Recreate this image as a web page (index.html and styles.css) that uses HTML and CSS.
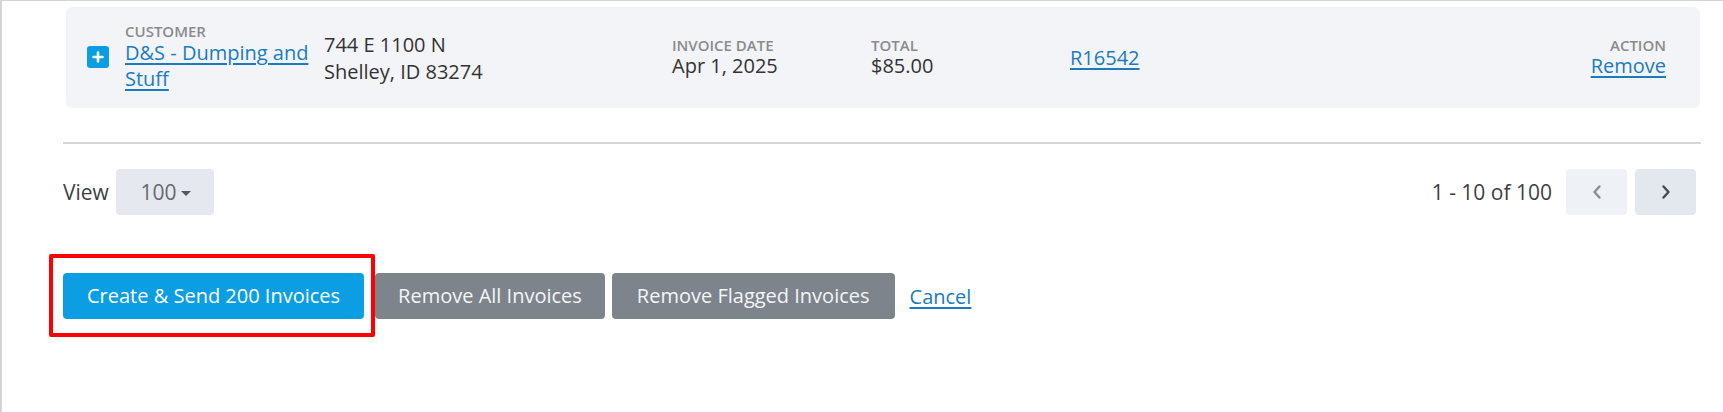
FILE: index.html
```html
<!DOCTYPE html>
<html lang="en">
<head>
<meta charset="utf-8">
<title>Invoices</title>
<link rel="stylesheet" href="styles.css">
</head>
<body>
<div class="page">
  <div class="content">
    <div class="card">
      <div class="cell cell-icon">
        <span class="expand">
          <svg width="22" height="22" viewBox="0 0 22 22"><path d="M11 6.5v9M6.5 11h9" stroke="#fff" stroke-width="2.6" stroke-linecap="round"/></svg>
        </span>
      </div>
      <div class="cell">
        <div class="label">CUSTOMER</div>
        <a class="link customer-link" href="#">D&amp;S - Dumping and Stuff</a>
      </div>
      <div class="cell address">
        <div>744 E 1100 N</div>
        <div>Shelley, ID 83274</div>
      </div>
      <div class="cell">
        <div class="label">INVOICE DATE</div>
        <div class="value">Apr 1, 2025</div>
      </div>
      <div class="cell">
        <div class="label">TOTAL</div>
        <div class="value">$85.00</div>
      </div>
      <div class="cell">
        <a class="link ref" href="#">R16542</a>
      </div>
      <div class="cell cell-action">
        <div class="label">ACTION</div>
        <a class="link value" href="#">Remove</a>
      </div>
    </div>

    <div class="divider"></div>

    <div class="pager">
      <div class="view">
        <span class="view-label">View</span>
        <button class="select" type="button">100 <span class="caret"></span></button>
      </div>
      <div class="nav">
        <span class="range">1 - 10 of 100</span>
        <button class="page-btn prev" type="button" aria-label="Previous">
          <svg width="12" height="16" viewBox="0 0 12 16"><path d="M8.5 2.5L3.5 8l5 5.5" fill="none" stroke="#8a8d91" stroke-width="2.4" stroke-linecap="round" stroke-linejoin="round"/></svg>
        </button>
        <button class="page-btn next" type="button" aria-label="Next">
          <svg width="12" height="16" viewBox="0 0 12 16"><path d="M3.5 2.5L8.5 8l-5 5.5" fill="none" stroke="#45484d" stroke-width="2.4" stroke-linecap="round" stroke-linejoin="round"/></svg>
        </button>
      </div>
    </div>

    <div class="actions">
      <span class="highlight-wrap">
        <button class="btn btn-primary" type="button">Create &amp; Send 200 Invoices</button>
        <span class="highlight"></span>
      </span>
      <button class="btn btn-gray btn-remove-all" type="button">Remove All Invoices</button>
      <button class="btn btn-gray btn-flagged" type="button">Remove Flagged Invoices</button>
      <a class="link cancel" href="#">Cancel</a>
    </div>
  </div>
</div>
</body>
</html>
```

FILE: styles.css
```css
* { box-sizing: border-box; }

html, body {
  margin: 0;
  padding: 0;
  background: #fff;
}

body {
  font-family: "Open Sans", "Noto Sans", sans-serif;
  color: #333;
  font-size: 20px;
}

.page {
  width: 1723px;
  height: 412px;
  border-top: 1px solid #d4d4d4;
  border-left: 2px solid #d4d4d4;
  overflow: hidden;
}

.content {
  margin-left: 61px;
  width: 1638px;
}

/* Card */
.card {
  margin: 6px 1px 0 3px;
  background: #f3f4f7;
  border-radius: 6px;
  padding: 16px 34px 16px 21px;
  display: grid;
  grid-template-columns: 38px 199px 348px 199px 199px 1fr auto;
  align-items: center;
  min-height: 101px;
}

.cell { min-width: 0; }

.expand {
  display: flex;
  width: 22px;
  height: 22px;
  background: #0a9de3;
  border-radius: 3px;
  margin-top: -1px;
}

.label {
  font-size: 15px;
  font-weight: 600;
  color: #8a8b8d;
  line-height: 17px;
}

.value {
  font-size: 20px;
  line-height: 24px;
  color: #333;
}

.link {
  color: #1a7cbe;
  text-decoration: underline;
  text-underline-offset: 3px;
  text-decoration-thickness: 1.5px;
}

.customer-link {
  display: block;
  font-size: 20px;
  line-height: 26px;
}

.address {
  line-height: 27px;
  color: #333;
}

.ref { line-height: 27px; }

.cell-action { text-align: right; }
.cell-action .link { display: block; }

/* Divider */
.divider {
  height: 2px;
  background: #d3d6da;
  margin-top: 34px;
}

/* Pager */
.pager {
  margin-top: 25px;
  display: flex;
  justify-content: space-between;
  align-items: center;
  padding-right: 5px;
  font-size: 21px;
}

.view {
  display: flex;
  align-items: center;
  gap: 7px;
}

.view-label { color: #3d3f42; }

.select {
  font: inherit;
  font-size: 21px;
  color: #66686b;
  background: #e5e9ef;
  border: none;
  border-radius: 4px;
  height: 46px;
  width: 98px;
  display: flex;
  align-items: center;
  justify-content: center;
  gap: 5px;
  padding: 0 0 0 2px;
}

.caret {
  display: inline-block;
  width: 0;
  height: 0;
  border-left: 5px solid transparent;
  border-right: 5px solid transparent;
  border-top: 5px solid #55575a;
  margin-top: 2px;
}

.nav {
  display: flex;
  align-items: center;
  gap: 8px;
}

.range {
  color: #3d3f42;
  margin-right: 6px;
}

.page-btn {
  width: 61px;
  height: 46px;
  border: none;
  border-radius: 4px;
  display: flex;
  align-items: center;
  justify-content: center;
  padding: 0;
}

.page-btn.prev { background: #eef1f5; }
.page-btn.next { background: #e3e7ee; }

/* Actions */
.actions {
  margin-top: 58px;
  display: flex;
  align-items: center;
}

.highlight-wrap {
  position: relative;
  display: inline-flex;
}

.highlight {
  position: absolute;
  top: -19px;
  bottom: -18px;
  left: -14px;
  right: -11px;
  border: 4px solid #ff0000;
  border-radius: 2px;
  pointer-events: none;
}

.btn {
  font: inherit;
  font-size: 20px;
  height: 46px;
  padding: 0 24px;
  border: none;
  border-radius: 4px;
  color: #fff;
  line-height: 46px;
}

.btn-primary { background: #0b9ee3; }

.btn-gray {
  background: #7d848c;
  color: #f4f5f6;
}

.btn-remove-all { margin-left: 11px; padding: 0 23px; }
.btn-flagged { margin-left: 7px; padding: 0 25px; }

.cancel {
  margin-left: 15px;
  font-size: 20px;
}
```
